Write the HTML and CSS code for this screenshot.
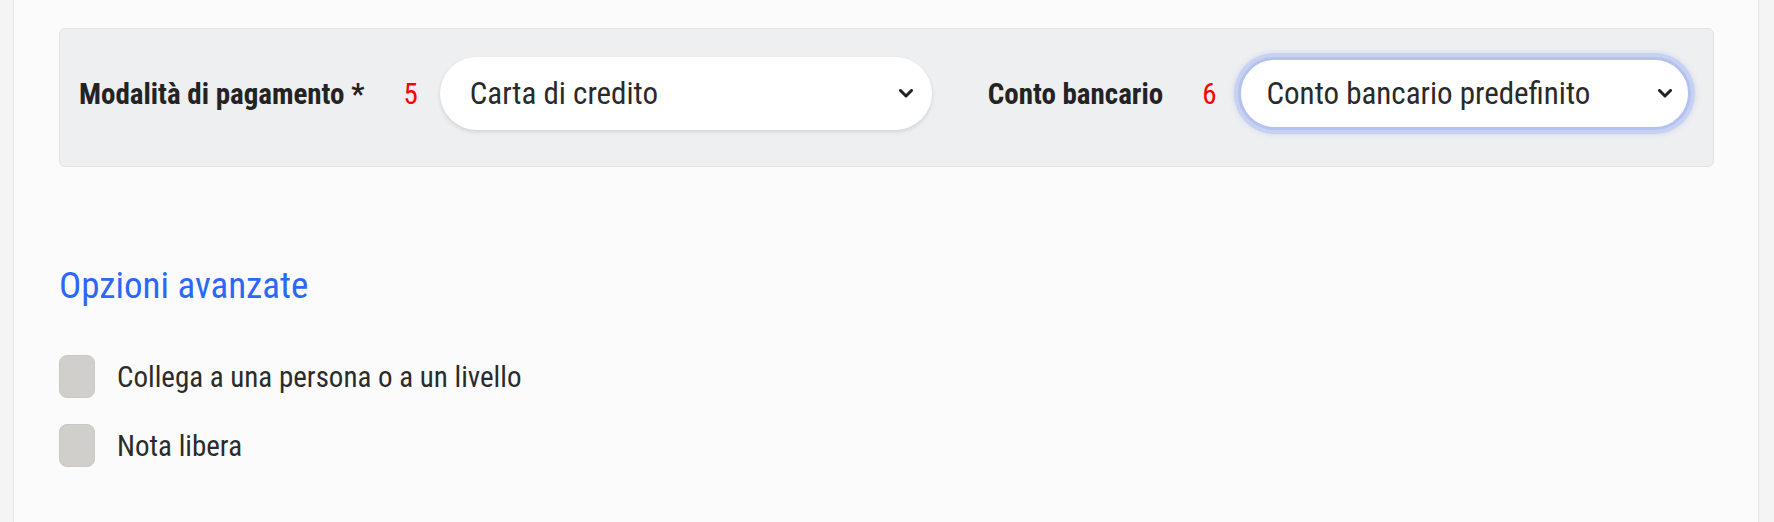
FILE: index.html
```html
<!DOCTYPE html>
<html lang="it">
<head>
<meta charset="UTF-8" />
<meta name="viewport" content="width=device-width, initial-scale=1" />
<title>Pagamento</title>
<link rel="stylesheet" href="styles.css">
</head>
<body>
<div class="page">
  <main class="content">
    <section class="payment-box">
      <label class="field-label" for="modalita">Modalità di pagamento *</label>
      <span class="step">5</span>
      <div class="select-wrap select-wide">
        <select id="modalita">
          <option>Carta di credito</option>
        </select>
        <svg class="chevron" viewBox="0 0 14 9" aria-hidden="true"><path d="M1.5 1.5 L7 7 L12.5 1.5" /></svg>
      </div>

      <label class="field-label label-conto" for="conto">Conto bancario</label>
      <span class="step">6</span>
      <div class="select-wrap select-focus">
        <select id="conto">
          <option>Conto bancario predefinito</option>
        </select>
        <svg class="chevron" viewBox="0 0 14 9" aria-hidden="true"><path d="M1.5 1.5 L7 7 L12.5 1.5" /></svg>
      </div>
    </section>

    <h3 class="advanced-title">Opzioni avanzate</h3>

    <div class="options">
      <label class="option">
        <input type="checkbox" />
        <span>Collega a una persona o a un livello</span>
      </label>
      <label class="option">
        <input type="checkbox" />
        <span>Nota libera</span>
      </label>
    </div>
  </main>
</div>
</body>
</html>
```

FILE: styles.css
```css
body {
  margin: 0;
  background: #f4f4f4;
  font-family: "Roboto Condensed", Roboto, "Liberation Sans", sans-serif;
  color: #2b2b2b;
}
.page {
  padding: 0 15px 0 13px;
  height: 522px;
  overflow: hidden;
}
.content {
  background: #fbfbfb;
  border-left: 1px solid #e6e6e6;
  border-right: 1px solid #e6e6e6;
  height: 100%;
  box-sizing: border-box;
  padding: 28px 44px 0 45px;
}
.payment-box {
  display: flex;
  align-items: center;
  background: #eeeff1;
  border: 1px solid #e2e3e5;
  border-radius: 6px;
  padding: 28px 22px 36px 19px;
  height: 139px;
  box-sizing: border-box;
}
.field-label {
  font-size: 29px;
  font-weight: 700;
  color: #232323;
}
.label-conto {
  margin-left: 56px;
}
.step {
  color: #ff0000;
  font-size: 29px;
  margin-left: 39px;
  margin-right: 22px;
}
.select-wrap {
  position: relative;
  flex: 1;
}
.select-wide {
  flex: 0 0 492px;
}
.select-wrap select {
  -webkit-appearance: none;
  appearance: none;
  width: 100%;
  height: 73px;
  border: 1px solid #fff;
  border-radius: 37px;
  background: #fff;
  padding: 0 50px 0 29px;
  font-family: inherit;
  font-size: 31px;
  color: #2a2a2a;
  box-shadow: 0 2px 4px rgba(0,0,0,0.12);
  outline: none;
}
.select-focus select {
  border: 3px solid #b5c2ef;
  box-shadow: 0 0 0 4px #c7d1f2, 0 0 4px 5px rgba(190,203,242,0.5);
  padding-left: 25px;
}
.chevron {
  position: absolute;
  right: 19px;
  top: 32px;
  width: 14px;
  height: 9px;
  fill: none;
  stroke: #222;
  stroke-width: 3;
  stroke-linecap: round;
  stroke-linejoin: round;
  pointer-events: none;
}
.advanced-title {
  margin: 96px 0 0 0;
  font-size: 37px;
  font-weight: 400;
  color: #2d67f5;
  line-height: 46px;
}
.options {
  display: flex;
  flex-direction: column;
  gap: 26px;
  margin-top: 46px;
}
.option {
  display: flex;
  align-items: center;
  gap: 22px;
  font-size: 29px;
  color: #2b2b2b;
}
.option input {
  -webkit-appearance: none;
  appearance: none;
  margin: 0;
  width: 36px;
  height: 43px;
  border-radius: 8px;
  background: #d0cfcc;
  border: 1px solid #c9c8c5;
}
```
